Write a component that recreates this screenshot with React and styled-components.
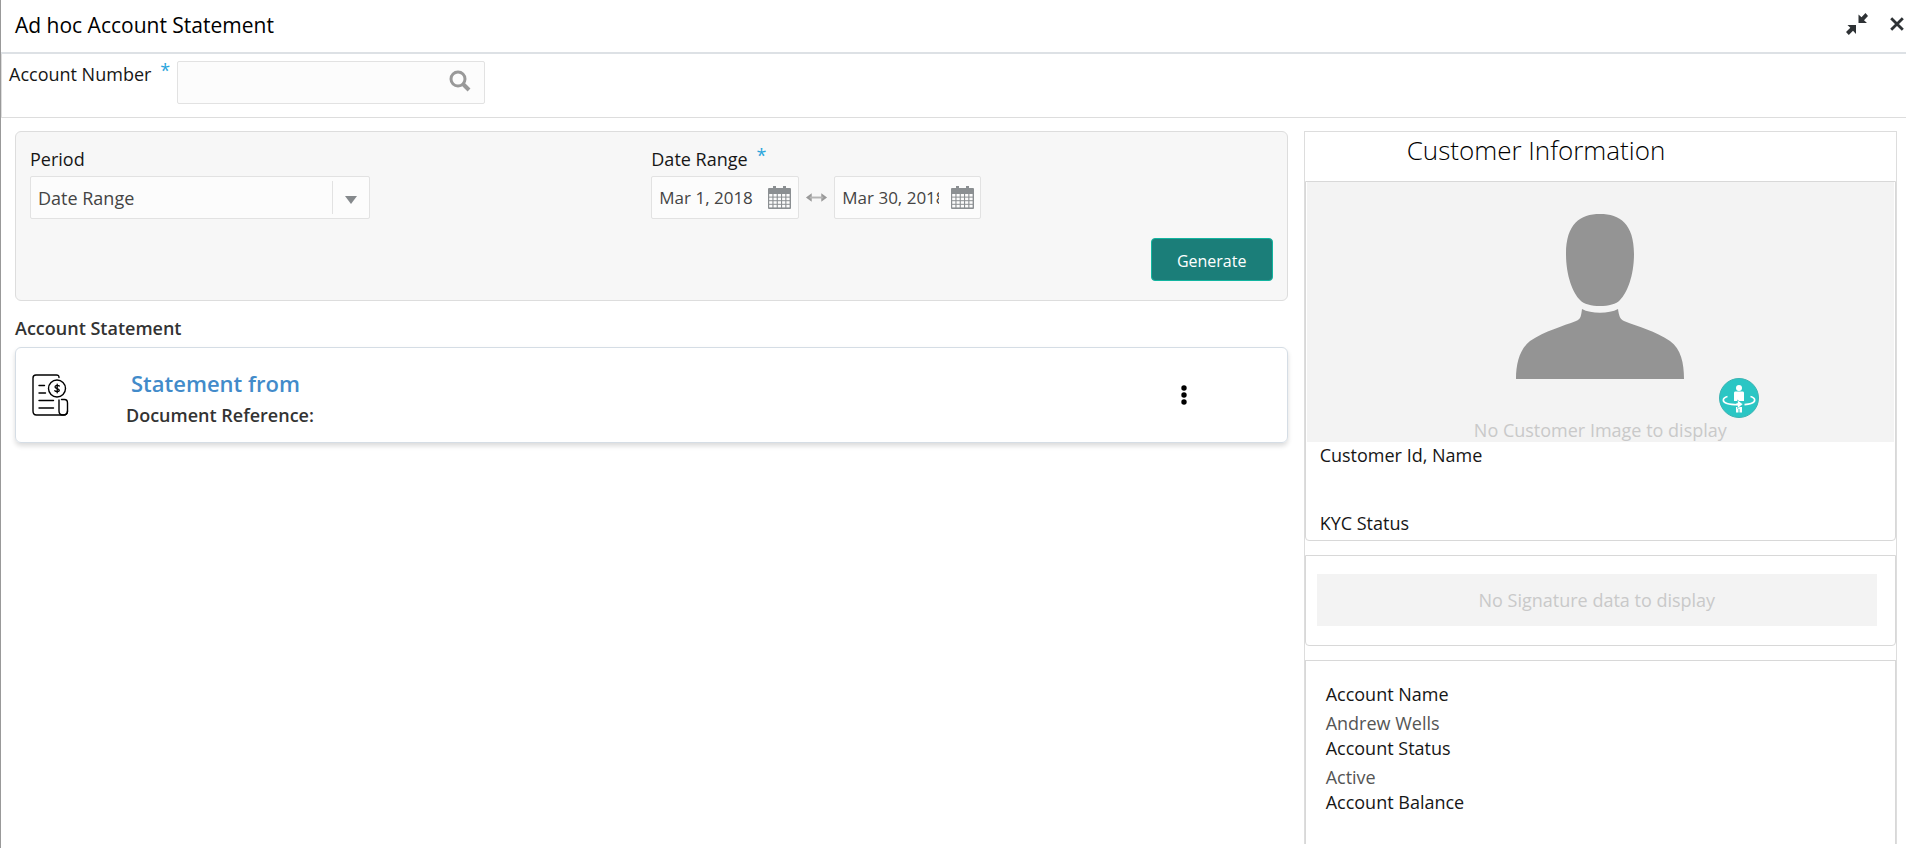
import React from "react";
import styled, { createGlobalStyle } from "styled-components";

const Global = createGlobalStyle`
  *, *::before, *::after { box-sizing: border-box; }
  html, body, #root { height: 100%; }
  body {
    margin: 0;
    background: #fff;
    color: #161616;
    font-family: "Open Sans", "Noto Sans", sans-serif;
    font-size: 18px;
    line-height: 24px;
  }
  h1, h2, h3, p, dl, dt, dd { margin: 0; font: inherit; }
  input, select, button { font: inherit; color: inherit; }
`;

const Page = styled.div`
  min-height: 100%;
  display: flex;
  flex-direction: column;
  border-left: 1px solid #999;
  padding-right: 2px;
`;

const TitleBar = styled.header`
  display: flex;
  align-items: center;
  justify-content: space-between;
  height: 54px;
  flex: none;
  padding: 0 2px 2px 14px;
  border-bottom: 2px solid #dde1e5;
`;

const Title = styled.h1`
  font-size: 21px;
  line-height: 28px;
  color: #000;
`;

const WindowActions = styled.div`
  display: flex;
  align-items: center;
  gap: 22px;
  padding-bottom: 2px;
`;

const IconButton = styled.button`
  display: flex;
  padding: 0;
  border: 0;
  background: none;
  cursor: pointer;
`;

const AccountBar = styled.div`
  display: flex;
  align-items: flex-start;
  gap: 7px;
  height: 64px;
  flex: none;
  padding: 7px;
  border: solid #ddd;
  border-width: 0 0 1px 1px;
`;

const Label = styled.label`
  display: flex;
  gap: 9px;
  line-height: 26px;
  white-space: nowrap;
`;

const Required = styled.span`
  color: #2aa5dc;
  line-height: 18px;
`;

const Field = styled.div`
  display: flex;
  align-items: center;
  gap: 12px;
  width: ${(p) => p.$width}px;
  height: 43px;
  padding: 0 ${(p) => p.$end}px 0 7px;
  border: 1px solid #e2e2e2;
  border-radius: 2px;
  background: #fcfcfc;
`;

const TextInput = styled.input`
  flex: 1;
  min-width: 0;
  height: 24px;
  padding: 0;
  border: 0;
  outline: 0;
  background: transparent;
  color: #444;
  font-size: 17px;
`;

const SearchButton = styled(IconButton)`
  padding-bottom: 4px;
`;

const Body = styled.div`
  display: flex;
  flex: 1;
  gap: 16px;
  padding: 13px 9px 4px 14px;
`;

const Main = styled.main`
  flex: 1274;
  min-width: 0;
`;

const Filters = styled.form`
  display: flex;
  flex-direction: column;
  justify-content: space-between;
  height: 170px;
  padding: 14px;
  padding-bottom: 19px;
  border: 1px solid #ddd;
  border-radius: 6px;
  background: #f7f7f7;
`;

const FilterRow = styled.div`
  display: grid;
  grid-template-columns: 1fr 1fr;
`;

const FieldGroup = styled.div`
  display: flex;
  flex-direction: column;
  align-items: flex-start;
  gap: 4px;
`;

const SelectBox = styled.div`
  display: grid;
  align-items: center;
  width: 340px;
  height: 43px;
  border: 1px solid #e2e2e2;
  border-radius: 2px;
  background: #fcfcfc;
`;

const Select = styled.select`
  grid-area: 1 / 1;
  width: 100%;
  height: 100%;
  padding: 0 44px 0 7px;
  border: 0;
  outline: 0;
  appearance: none;
  background: transparent;
  color: #444;
`;

const SelectArrow = styled.span`
  grid-area: 1 / 1;
  justify-self: end;
  display: flex;
  align-items: center;
  justify-content: center;
  width: 37px;
  height: 33px;
  padding-top: 4px;
  border-left: 1px solid #e2e2e2;
  pointer-events: none;
`;

const DateRange = styled.div`
  display: flex;
  align-items: center;
  gap: 6px;
`;

const Generate = styled.button`
  align-self: flex-end;
  width: 122px;
  height: 43px;
  padding: 2px 0 0;
  border: 1px solid #12b5a0;
  border-radius: 4px;
  background: #1b7e79;
  color: #fff;
  font-size: 16px;
  cursor: pointer;
`;

const SectionTitle = styled.h2`
  padding: 15px 0 7px;
  color: #333;
  font-weight: 600;
`;

const StatementCard = styled.article`
  display: grid;
  grid-template-columns: 94px 1fr 106px;
  align-items: center;
  height: 96px;
  padding-left: 16px;
  border: 1px solid #d5dde5;
  border-radius: 6px;
  box-shadow: 0 3px 5px rgba(0, 0, 0, 0.14);
`;

const StatementText = styled.div`
  padding-top: 8px;
`;

const StatementLink = styled.a`
  display: inline-block;
  padding-left: 5px;
  color: #428bca;
  font-size: 22px;
  line-height: 32px;
  font-weight: 600;
  text-decoration: none;
`;

const DocRef = styled.p`
  line-height: 32px;
  font-weight: 600;
  color: #333;
`;

const Side = styled.aside`
  flex: 592;
  min-width: 0;
  display: flex;
  flex-direction: column;
  border: 1px solid #ddd;
  border-bottom: 0;
`;

const SideTitle = styled.h2`
  height: 49px;
  flex: none;
  padding-left: 102px;
  font-size: 26px;
  line-height: 36px;
  font-weight: 300;
  color: #000;
`;

const SideBox = styled.section`
  border: 1px solid #d8d8d8;
  border-radius: ${(p) => (p.$open ? "0" : "0 0 4px 4px")};
  ${(p) => (p.$open ? "flex: 1; border-bottom: 0; padding: 20px;" : "")}
`;

const Photo = styled.div`
  position: relative;
  display: flex;
  flex-direction: column;
  align-items: center;
  justify-content: space-between;
  height: 260px;
  margin: 0 1px;
  padding-top: 32px;
  background: #f3f3f3;
`;

const Muted = styled.p`
  color: #c9c9c9;
`;

const Badge = styled.svg`
  position: absolute;
  left: calc(50% + 119px);
  bottom: 24px;
`;

const CustomerFacts = styled.dl`
  display: grid;
  gap: 44px;
  padding: 1px 14px 5px;
`;

const Signature = styled.div`
  display: flex;
  align-items: center;
  justify-content: center;
  height: 52px;
  margin: 18px 18px 19px 11px;
  background: #f3f3f3;
`;

const Details = styled.dl`
  dt { line-height: 26px; }
  dd { padding-top: 4px; color: #555; }
`;

const Gap = styled.div`
  height: 14px;
  flex: none;
`;

const SearchIcon = () => (
  <svg width="22" height="22" viewBox="0 0 22 22" fill="none" stroke="#999">
    <circle cx="9" cy="9" r="7" strokeWidth="3" />
    <path d="M14 14L20 20" strokeWidth="4" />
  </svg>
);

const CalendarIcon = () => (
  <svg width="23" height="23" viewBox="0 0 23 23">
    <path d="M5 0h3v3H5zM15 0h3v3h-3z" fill="#8b8f92" />
    <rect y="2" width="23" height="21" rx="1" fill="#8b8f92" />
    {[0, 1, 2, 3].map((r) =>
      [0, 1, 2, 3, 4].map((c) => (
        <rect key={`${r}${c}`} x={1.2 + c * 4.3} y={8 + r * 3.6} width="3.2" height="2.6" fill="#fcfcfc" />
      ))
    )}
  </svg>
);

const RangeArrow = () => (
  <svg width="23" height="12" viewBox="0 0 24 12" fill="#999">
    <path d="M1 5.500L7 1v9zM23 5.500L17 1v9z" />
    <rect x="5" y="4.500" width="14" height="2" fill="#b5b5b5" />
  </svg>
);

const CollapseIcon = () => (
  <svg width="22" height="22" viewBox="0 0 22 22" fill="#2e3235">
    <path d="M12.500 1.500V10H21L18 7.200 22 3 19.500 0 15.500 4.200z" />
    <path d="M10 21V12H1.500L4.300 14.800 0 19 2.800 22 7 17.800z" />
  </svg>
);

const CloseIcon = () => (
  <svg width="14" height="14" viewBox="0 0 14 14" stroke="#2e3235" strokeWidth="2.800">
    <path d="M1.200 1.200L12.800 12.800M12.800 1.200L1.200 12.800" />
  </svg>
);

const StatementIcon = () => (
  <svg width="37" height="42" viewBox="0 0 37 42" fill="none" stroke="#000" strokeWidth="1.400" strokeLinecap="round">
    <path d="M27 3.500C27 1.500 26 1 24.500 1H4C2 1 1 2 1 4V37C1 39.500 2.500 41 4.500 41H31.500C34.500 41 35.500 39.500 35.500 37V29C35.500 26.500 34.500 25.500 32.500 25.500H29.500" />
    <path d="M27 26V37C27 39.500 28.500 41 31 41C33.500 41 35.500 39.500 35.500 37" />
    <circle cx="25" cy="14.500" r="8.500" />
    <path d="M27.300 12C26.500 11 23 11 23 13C23 15 27.300 14 27.300 16.200C27.300 18 24 18 22.800 16.800M25.200 10.200V18.800" strokeWidth="1.300" />
    <path d="M7 11.500H12.500M7 19H13.500M7 26.500H21.500M7 34H21.500" />
  </svg>
);

const MoreIcon = () => (
  <svg width="6" height="20" viewBox="0 0 6 20" fill="#000">
    <circle cx="3" cy="3" r="2.700" />
    <circle cx="3" cy="10" r="2.700" />
    <circle cx="3" cy="17" r="2.700" />
  </svg>
);

const Silhouette = () => (
  <svg width="170" height="166" viewBox="0 0 170 166" fill="#949494">
    <path d="M85 0C105 0 119 10 119 40C119 62 112 79 105 86C98 94 72 94 65 86C58 79 51 62 51 40C51 10 65 0 85 0Z" />
    <path d="M67 95C76 100 94 100 103 95C104 102 105 105 109 107C124 113 140 117 155 127C166 135 169 149 169 165H1C1 149 5 135 15 127C30 117 48 112 61 107C66 105 66 102 67 95Z" />
  </svg>
);

const RotateBadge = () => (
  <Badge width="40" height="40" viewBox="0 0 40 40" role="img" aria-label="Rotate view">
    <circle cx="20" cy="20" r="19.500" fill="#2bc6c4" stroke="#3cb3b2" />
    <g fill="#fff">
      <circle cx="20" cy="10" r="3" />
      <path d="M16 13.500H24Q25 13.500 25 15V23H15V15Q15 13.500 16 13.500Z" />
      <path d="M17 29H23V34.500H20.500V31H19.500V34.500H17Z" />
      <path d="M18.500 22L24 26.200 18.500 30.500V27.500H17V25H18.500Z" stroke="#2bc6c4" strokeWidth=".6" />
    </g>
    <path d="M8.500 18.500C3 20 3 24 8 25.500C12 26.800 16 26.700 20 26.700M31.500 18.500C37 20 37 24 32 25.500C30 26.200 28 26.400 25.500 26.600" fill="none" stroke="#fff" strokeWidth="1.600" />
  </Badge>
);

export default function App() {
  return (
    <Page>
      <Global />
      <TitleBar>
        <Title>Ad hoc Account Statement</Title>
        <WindowActions>
          <IconButton type="button" aria-label="Collapse"><CollapseIcon /></IconButton>
          <IconButton type="button" aria-label="Close"><CloseIcon /></IconButton>
        </WindowActions>
      </TitleBar>

      <AccountBar>
        <Label htmlFor="account">Account Number <Required>*</Required></Label>
        <Field $width={308} $end={13}>
          <TextInput id="account" type="text" />
          <SearchButton type="button" aria-label="Search account"><SearchIcon /></SearchButton>
        </Field>
      </AccountBar>

      <Body>
        <Main>
          <Filters>
            <FilterRow>
              <FieldGroup>
                <Label htmlFor="period">Period</Label>
                <SelectBox>
                  <Select id="period"><option>Date Range</option></Select>
                  <SelectArrow>
                    <svg width="12" height="8" viewBox="0 0 12 8"><path d="M0 0H12L6 8Z" fill="#85898c" /></svg>
                  </SelectArrow>
                </SelectBox>
              </FieldGroup>
              <FieldGroup>
                <Label htmlFor="from">Date Range <Required>*</Required></Label>
                <DateRange>
                  <Field $width={148} $end={7}>
                    <TextInput id="from" type="text" defaultValue="Mar 1, 2018" />
                    <IconButton type="button" aria-label="Pick start date"><CalendarIcon /></IconButton>
                  </Field>
                  <RangeArrow />
                  <Field $width={147} $end={6}>
                    <TextInput type="text" aria-label="End date" defaultValue="Mar 30, 2018" />
                    <IconButton type="button" aria-label="Pick end date"><CalendarIcon /></IconButton>
                  </Field>
                </DateRange>
              </FieldGroup>
            </FilterRow>
            <Generate type="button">Generate</Generate>
          </Filters>

          <SectionTitle>Account Statement</SectionTitle>
          <StatementCard>
            <StatementIcon />
            <StatementText>
              <StatementLink href="#statement">Statement from</StatementLink>
              <DocRef>Document Reference:</DocRef>
            </StatementText>
            <IconButton type="button" aria-label="More actions"><MoreIcon /></IconButton>
          </StatementCard>
        </Main>

        <Side>
          <SideTitle>Customer Information</SideTitle>
          <SideBox>
            <Photo>
              <Silhouette />
              <Muted>No Customer Image to display</Muted>
              <RotateBadge />
            </Photo>
            <CustomerFacts>
              <dt>Customer Id, Name</dt>
              <dt>KYC Status</dt>
            </CustomerFacts>
          </SideBox>
          <Gap />
          <SideBox>
            <Signature><Muted>No Signature data to display</Muted></Signature>
          </SideBox>
          <Gap />
          <SideBox $open>
            <Details>
              <dt>Account Name</dt>
              <dd>Andrew Wells</dd>
              <dt>Account Status</dt>
              <dd>Active</dd>
              <dt>Account Balance</dt>
            </Details>
          </SideBox>
        </Side>
      </Body>
    </Page>
  );
}
